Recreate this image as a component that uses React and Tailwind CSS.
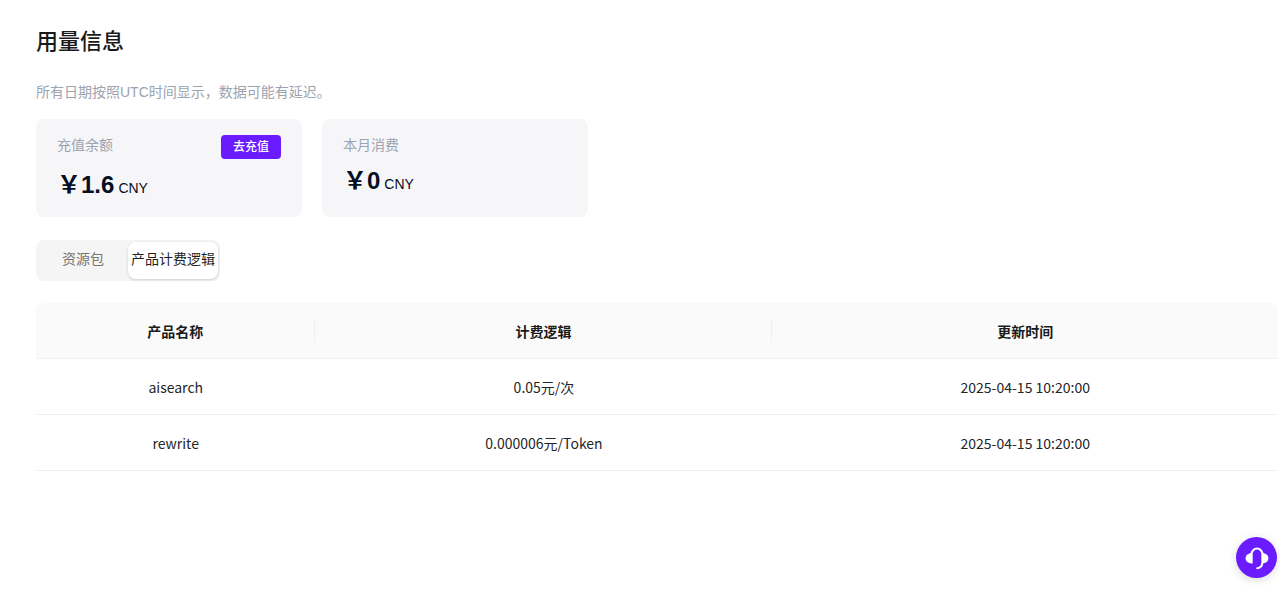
import { useState } from 'react'

const fontClass = "font-['Liberation_Sans','Noto_Sans_CJK_SC',sans-serif]"
const tableFontClass = "font-['Noto_Sans_CJK_SC',sans-serif]"

const tabs = [
  { id: 'packages', label: '资源包' },
  { id: 'billing', label: '产品计费逻辑' },
]

const columns = [
  { label: '产品名称', width: 'w-[22.5%]' },
  { label: '计费逻辑', width: 'w-[36.8%]' },
  { label: '更新时间', width: 'w-[40.7%]' },
]

const products = [
  { name: 'aisearch', price: '0.05元/次', updatedAt: '2025-04-15 10:20:00' },
  { name: 'rewrite', price: '0.000006元/Token', updatedAt: '2025-04-15 10:20:00' },
]

function BalanceCard({ label, amount, action }) {
  return (
    <div className="w-[266px] rounded-lg bg-[#f6f6f9] px-[21px] pt-4 pb-[11px]">
      <div className="flex items-start justify-between">
        <span className="text-sm leading-5 text-[#9ca3af]">{label}</span>
        {action}
      </div>
      <div className="mt-2 leading-9 text-[#030f23]">
        <span className="text-2xl leading-9 font-bold">￥{amount}</span>
        <span className="ml-1 text-sm">CNY</span>
      </div>
    </div>
  )
}

function HeadsetIcon() {
  return (
    <svg width="26" height="26" viewBox="0 0 26 26" fill="none" aria-hidden="true">
      <path d="M7.6 17.6V9a5.4 5.4 0 0 1 10.8 0v8.2c0 3.4-1.8 5.7-5.2 6" stroke="#fff" strokeWidth="2" strokeLinecap="round" />
      <path d="M8.2 8v10.4C4 18.400 1.600 16.100 1.600 13.200S4 8 8.200 8Z" fill="#fff" />
      <path d="M17.800 8v10.400c4.200 0 6.600-2.300 6.600-5.200S22 8 17.800 8Z" fill="#fff" />
    </svg>
  )
}

export default function App() {
  const [activeTab, setActiveTab] = useState('billing')

  return (
    <main className={`min-h-screen bg-white pt-6 pr-[2px] pl-9 ${fontClass}`}>
      <h1 className="mb-[22px] text-[22px] leading-9 font-medium text-[#1a1a1a]">用量信息</h1>
      <p className="mb-[17px] text-sm leading-5 text-[#9ca3af]">所有日期按照UTC时间显示，数据可能有延迟。</p>

      <div className="mb-[23px] flex flex-wrap items-stretch gap-5">
        <BalanceCard
          label="充值余额"
          amount="1.6"
          action={
            <button type="button" className="h-6 rounded bg-[#6a1bff] px-3 text-xs font-medium text-white">去充值</button>
          }
        />
        <BalanceCard label="本月消费" amount="0" />
      </div>

      {/* Tabs */}
      <div className="mb-[22px] inline-flex rounded-lg bg-[#f5f5f5] p-[2px]">
        {tabs.map(({ id, label }) => (
          <button key={id} type="button" onClick={() => setActiveTab(id)}
            className={`h-[37px] w-[90px] rounded-lg pb-[3px] text-center text-sm whitespace-nowrap ${
              activeTab === id ? 'bg-white text-[#1f1f1f] shadow-[0_1px_3px_rgba(0,0,0,0.16)]' : 'text-[#757575]'
            }`}>
            {label}
          </button>
        ))}
      </div>

      <table className={`w-full table-fixed border-separate border-spacing-0 text-center text-sm text-[#262626] ${tableFontClass}`}>
        <thead>
          <tr>
            {columns.map(({ label, width }, i) => (
              <th key={label} scope="col"
                className={`h-14 border-b border-[#f0f0f0] bg-[#fafafa] p-0 font-bold text-[#1a1a1a] first:rounded-tl-lg last:rounded-tr-lg ${width}`}>
                <div className={`leading-6 ${i < columns.length - 1 ? 'border-r border-[#f0f0f0]' : ''}`}>{label}</div>
              </th>
            ))}
          </tr>
        </thead>
        <tbody>
          {products.map(({ name, price, updatedAt }) => (
            <tr key={name}>
              <td className="h-14 border-b border-[#f0f0f0] p-0">{name}</td>
              <td className="h-14 border-b border-[#f0f0f0] p-0">{price}</td>
              <td className="h-14 border-b border-[#f0f0f0] p-0">{updatedAt}</td>
            </tr>
          ))}
        </tbody>
      </table>

      {/* Support button floats over the page */}
      <button type="button" aria-label="联系客服"
        className="fixed right-[3px] bottom-4 flex h-[41px] w-[41px] items-center justify-center rounded-full bg-[#6a1bff] shadow-[0_2px_10px_rgba(0,0,0,0.15)]">
        <HeadsetIcon />
      </button>
    </main>
  )
}
